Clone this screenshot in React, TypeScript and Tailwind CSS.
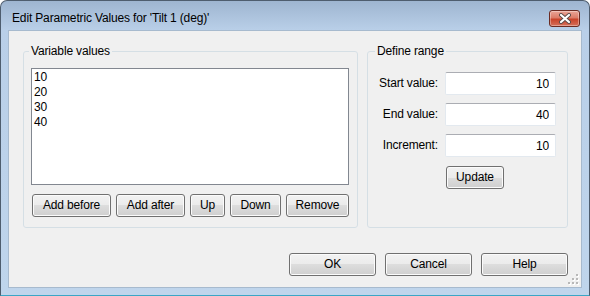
import React from 'react';

const btn =
  'h-[23px] rounded-[3px] border border-[#707070] bg-[linear-gradient(to_bottom,#f2f2f2_0%,#ebebeb_50%,#dddddd_50%,#cfcfcf_100%)] shadow-[inset_0_0_0_1px_#fbfbfb] text-black text-[12px] leading-[15px] flex items-center justify-center';

const rangeRows = [
  { label: 'Start value:', value: '10' },
  { label: 'End value:', value: '40' },
  { label: 'Increment:', value: '10' },
];

const listValues = ['10', '20', '30', '40'];

function CloseButton() {
  return (
    <div className="mt-[9px] w-[31px] h-[17px] rounded-[3px] border border-[#6b2b22] bg-[linear-gradient(to_bottom,#eaa597_0%,#dc7c68_45%,#c9432a_55%,#d5705a_100%)] shadow-[inset_0_0_0_1px_rgba(255,255,255,0.35)] flex items-center justify-center">
      <svg width="14" height="11" viewBox="0 0 14 11">
        <path d="M3 2 L11 9 M11 2 L3 9" stroke="#5a4a48" strokeWidth="4" strokeLinecap="round" fill="none" />
        <path d="M3 2 L11 9 M11 2 L3 9" stroke="#ffffff" strokeWidth="2.2" strokeLinecap="round" fill="none" />
      </svg>
    </div>
  );
}

function SizeGrip() {
  const dots = [
    [8, 0],
    [4, 4], [8, 4],
    [0, 8], [4, 8], [8, 8],
  ];
  return (
    <svg className="absolute right-[2px] bottom-[2px]" width="11" height="11" viewBox="0 0 11 11">
      {dots.map(([x, y]) => (
        <g key={`${x}-${y}`}>
          <rect x={x + 1} y={y + 1} width="2" height="2" fill="#ffffff" />
          <rect x={x} y={y} width="2" height="2" fill="#b8b8b8" />
        </g>
      ))}
    </svg>
  );
}

export default function App() {
  return (
    <div className="w-[590px] h-[296px] flex flex-col border border-[#4e5d6e] border-b-[#3aa6c6] rounded-t-[7px] bg-[linear-gradient(to_bottom,#9eb5d0_0px,#b9cfe8_29px,#bfd5ec_100%)] font-['Liberation_Sans',Arial,sans-serif] text-[12px] tracking-[-0.15px] text-black overflow-hidden">
      {/* title bar */}
      <div className="h-[29px] flex items-start justify-between pl-[11px] pr-[9px]">
        <span className="mt-[10px] leading-[15px] text-black">Edit Parametric Values for 'Tilt 1 (deg)'</span>
        <CloseButton />
      </div>

      {/* client area */}
      <div className="relative mx-[7px] h-[258px] bg-[#f0f0f0] border border-[#a7bace] flex flex-col pl-[14px] pr-[13px] pt-[12px]">
        <div className="flex gap-[9px]">
          <fieldset className="w-[335px] h-[185px] border border-[#d5dfe5] rounded-[3px] pl-[7px] pr-[8px] pt-[9px]">
            <legend className="-ml-[2px] px-[2px] leading-[16px]">Variable values</legend>
            <div className="w-[318px] h-[117px] bg-white border border-[#828790] pt-[1px] px-[2px]">
              {listValues.map((v) => (
                <div key={v} className="leading-[15px] h-[15px]">{v}</div>
              ))}
            </div>
            <div className="flex gap-[5px] mt-[9px] ml-[1px]">
              <button className={`${btn} w-[79px]`}>Add before</button>
              <button className={`${btn} w-[69px]`}>Add after</button>
              <button className={`${btn} w-[35px]`}>Up</button>
              <button className={`${btn} w-[51px]`}>Down</button>
              <button className={`${btn} w-[63px]`}>Remove</button>
            </div>
          </fieldset>

          <fieldset className="w-[201px] h-[185px] border border-[#d5dfe5] rounded-[3px] pl-[8px] pr-[11px] pt-[13px]">
            <legend className="-ml-[1px] px-[2px] leading-[16px]">Define range</legend>
            <div className="flex flex-col gap-[8px]">
              {rangeRows.map((r) => (
                <div key={r.label} className="flex items-center">
                  <span className="w-[62px] text-right leading-[15px] whitespace-nowrap">{r.label}</span>
                  <input
                    readOnly
                    value={r.value}
                    className="ml-[7px] w-[111px] h-[23px] bg-white border border-[#e3e9ef] border-t-[#abadb3] rounded-[2px] text-right pr-[6px] text-[12px] text-black outline-none"
                  />
                </div>
              ))}
            </div>
            <button className={`${btn} w-[58px] mt-[9px] ml-[70px]`}>Update</button>
          </fieldset>
        </div>

        <div className="flex justify-end gap-[9px] mt-[25px]">
          <button className={`${btn} w-[87px]`}>OK</button>
          <button className={`${btn} w-[87px]`}>Cancel</button>
          <button className={`${btn} w-[87px]`}>Help</button>
        </div>

        <SizeGrip />
      </div>
    </div>
  );
}
